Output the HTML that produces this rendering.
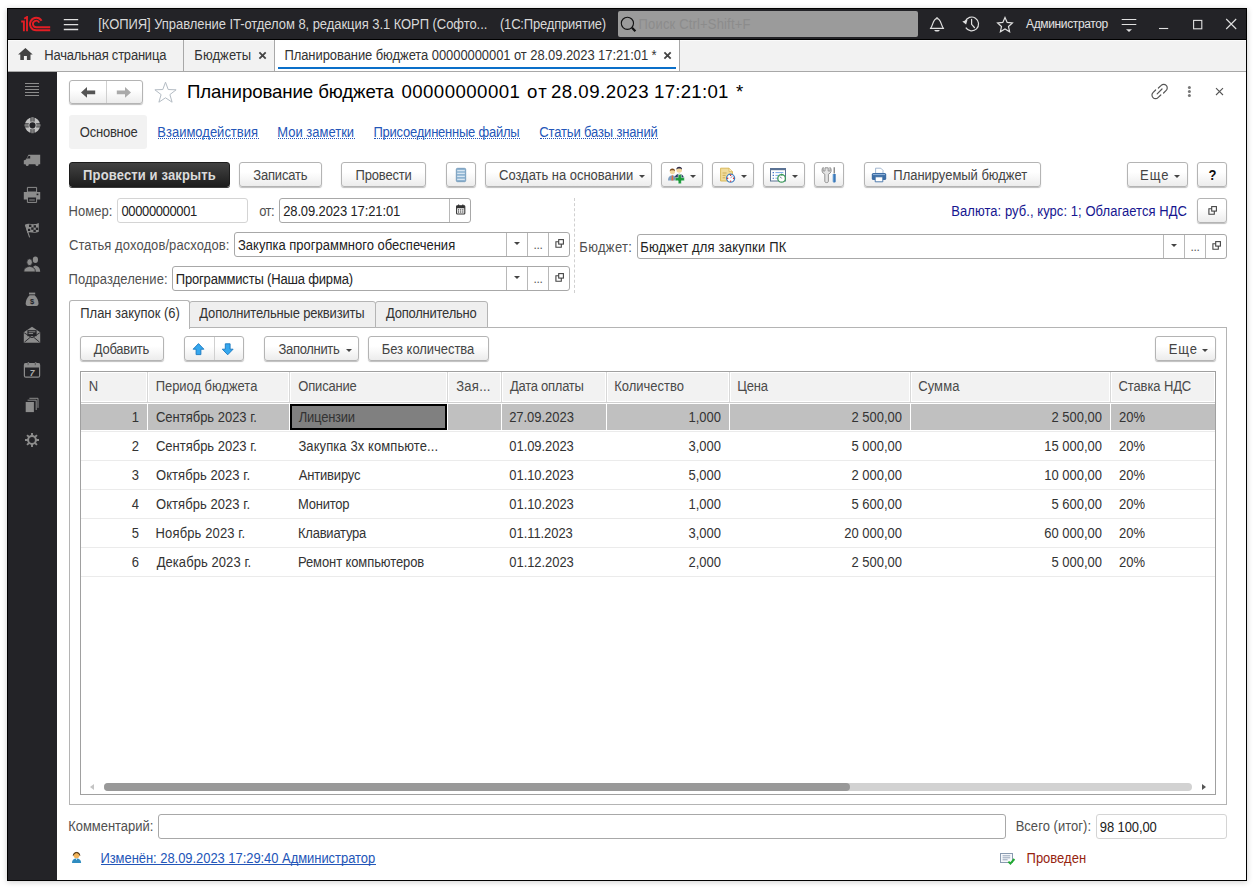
<!DOCTYPE html>
<html lang="ru">
<head>
<meta charset="utf-8">
<title>Планирование бюджета</title>
<style>
*{box-sizing:border-box;margin:0;padding:0}
html,body{width:1254px;height:888px;overflow:hidden;background:#fff}
body{font-family:"Liberation Sans",Arial,sans-serif;font-size:13px;color:#333;position:relative}
.abs{position:absolute}
#shadow{position:absolute;left:7px;top:8px;width:1240px;height:873px;box-shadow:0 1px 6px 0 rgba(0,0,0,.2)}
#win{position:absolute;left:7px;top:8px;width:1240px;height:873px;border:1px solid #000;background:#fff;overflow:hidden}
/* coordinates inside #win are page coords via wrapper offset */
#pg{position:absolute;left:-8px;top:-9px;width:1254px;height:888px}
#titlebar{left:8px;top:9px;width:1238px;height:31px;background:#232327;border-bottom:1px solid #000}
#tabbar{left:8px;top:40px;width:1238px;height:32px;background:#f2f2f2;border-bottom:1px solid #a8a8a8;border-top:1px solid #fafafa}
#side{left:8px;top:72px;width:49px;height:808px;background:#232327}
.t{position:absolute;white-space:nowrap;line-height:16px;height:16px}
.tt{color:#d8d8d8;font-size:13px}
.btn{position:absolute;height:25px;border:1px solid #b4b4b4;border-radius:3px;background:linear-gradient(#fff 0%,#fff 40%,#ececec 100%);box-shadow:0 1px 1px rgba(0,0,0,.26);text-align:center;line-height:25px;white-space:nowrap;color:#444;font-size:13px}
.btn.dark{background:linear-gradient(#424242,#1e1e1e);border-color:#1c1c1c;color:#dadada;font-weight:bold;box-shadow:0 1px 0 #3a3a3a}
.inp{position:absolute;height:25px;border:1px solid #a8a8a8;border-radius:3px;background:#fff;line-height:25px;padding-left:4px;white-space:nowrap;overflow:hidden;color:#222;font-size:13px}
.inp.lt{border-color:#d4d4d4}
.lbl{position:absolute;white-space:nowrap;line-height:16px;color:#505050;font-size:13px}
.lnk{position:absolute;white-space:nowrap;line-height:16px;color:#2456b8;font-size:13px;border-bottom:1px dotted #2456b8;height:14px}
.caret{display:inline-block;width:0;height:0;border-left:3px solid transparent;border-right:3px solid transparent;border-top:4px solid #444;vertical-align:middle;margin-left:5px;position:relative;top:-1px}
.sub{position:absolute;top:0;width:21px;height:23px;border-left:1px solid #b8b8b8;text-align:center;color:#555;line-height:25px;font-size:12px;letter-spacing:-0.3px}
.r{position:absolute;left:81px;width:1134px;height:28px}
.c{position:absolute;top:0;height:28px;line-height:30px;font-size:13px;color:#333;white-space:nowrap;overflow:hidden}
.c1{left:0;width:66px;text-align:right;padding-right:8px}
.c2{left:67px;width:141px;padding-left:8px}
.c3{left:209px;width:157px;padding-left:8px}
.c5{left:422px;width:104px;padding-left:7px}
.c6{left:527px;width:122px;text-align:right;padding-right:9px}
.c7{left:650px;width:179px;text-align:right;padding-right:8px}
.c8{left:830px;width:199px;text-align:right;padding-right:8px}
.c9{left:1030px;width:104px;padding-left:8px}
.car{position:absolute;width:0;height:0;border-left:3.5px solid transparent;border-right:3.5px solid transparent;border-top:3.5px solid #444}
.sub i{position:absolute;left:7px;top:9px;width:0;height:0;border-left:3px solid transparent;border-right:3px solid transparent;border-top:3.500px solid #444}
.sub svg{position:absolute;left:5px;top:5px}
i{font-style:normal}
.x{display:inline-block;position:relative;line-height:normal;transform:scaleY(1.075);transform-origin:0 80%}
.x.n{transform:none}
</style>
</head>
<body>
<div id="shadow"></div>
<div id="win"><div id="pg">

<!-- TITLE BAR -->
<div class="abs" id="titlebar"></div>
<div class="t tt" style="left:98px;top:16.7px"><span class="x" style="letter-spacing:-0.056px;left:0.23px;">[КОПИЯ] Управление IT-отделом 8, редакция 3.1 КОРП (Софто...</span></div>
<div class="t tt" style="left:500px;top:16.7px"><span class="x" style="letter-spacing:-0.186px;left:-0.05px;">(1С:Предприятие)</span></div>
<div class="abs" style="left:618px;top:11px;width:300px;height:26px;background:#9b9b9b;border-radius:2px"></div>
<div class="t" style="left:639px;top:16.7px;color:#8c8c8c;font-size:13px"><span class="x" style="letter-spacing:0.166px;left:-0.44px;">Поиск Ctrl+Shift+F</span></div>
<div class="t" style="left:1026px;top:16px;color:#e4e4e4;font-size:12px"><span class="x n" style="letter-spacing:-0.357px;">Администратор</span></div>

<!-- TAB BAR -->
<div class="abs" id="tabbar"></div>
<div class="abs" style="left:275px;top:40px;width:404px;height:31px;background:#fff"></div>
<div class="abs" style="left:183px;top:40px;width:1px;height:31px;background:#a8a8a8"></div>
<div class="abs" style="left:274px;top:40px;width:1px;height:31px;background:#a8a8a8"></div>
<div class="abs" style="left:679px;top:40px;width:1px;height:31px;background:#a8a8a8"></div>
<div class="abs" style="left:278px;top:67px;width:398px;height:2px;background:#0a6fc9"></div>
<div class="t" style="left:44px;top:48px;color:#333"><span class="x" style="letter-spacing:-0.217px;left:0.27px;">Начальная страница</span></div>
<div class="t" style="left:194px;top:48px;color:#333"><span class="x" style="letter-spacing:0.085px;left:0.27px;">Бюджеты</span></div>
<div class="t" style="left:285px;top:48px;color:#333"><span class="x" style="letter-spacing:-0.078px;left:-0.57px;">Планирование бюджета 00000000001 от 28.09.2023 17:21:01 *</span></div>


<!-- title icons -->
<svg class="abs" style="left:20px;top:16px" width="32" height="16" viewBox="20 16 32 16">
<g fill="none" stroke="#e31e24" stroke-width="1.9">
<path d="M21.2 21.5 L23.9 21.5 L23.9 31.2"/>
<path d="M24.2 18.8 L27 17 L27 31.2"/>
<path d="M41.6 20.8 A6.25 6.25 0 1 0 36.2 30.3 L50.2 30.3"/>
<path d="M39.2 22.6 A3.3 3.3 0 1 0 36.2 27.3 L50.2 27.3"/>
</g></svg>
<svg class="abs" style="left:63px;top:18px" width="16" height="14" viewBox="0 0 16 14"><g stroke="#e0e0e0" stroke-width="1.3"><path d="M0.8 1.7H15.2M0.8 6.6H15.2M0.8 11.5H15.2"/></g></svg>
<svg class="abs" style="left:619px;top:14px" width="20" height="20" viewBox="619 14 20 20"><circle cx="627.4" cy="23.3" r="6.1" fill="none" stroke="#111" stroke-width="1.1"/><path d="M632 27.8L635.4 31.2" stroke="#111" stroke-width="2.2"/></svg>
<svg class="abs" style="left:928px;top:15px" width="18" height="18" viewBox="928 15 18 18"><g fill="none" stroke="#e0e0e0" stroke-width="1.2" stroke-linejoin="round"><path d="M930.4 28.4 C933.2 26 932.6 18.6 937 18.6 C941.4 18.6 940.8 26 943.6 28.4 Z"/><path d="M937 17v1.6"/></g><path d="M934 30h6l-1.6 1.6h-2.8z" fill="#e0e0e0"/></svg>
<svg class="abs" style="left:960px;top:14px" width="22" height="20" viewBox="960 14 22 20"><g fill="none" stroke="#e0e0e0" stroke-width="1.2"><path d="M965.2 21.5 A6.9 6.9 0 1 1 965.8 27.6"/><path d="M971.6 19.3v5l2.8 3.2" stroke-linecap="round"/></g><path d="M962.3 21.4l5.2-1.6-1.4 4.6z" fill="#e0e0e0"/></svg>
<svg class="abs" style="left:996px;top:15px" width="18" height="18" viewBox="996 15 18 18"><path d="M1005 17.4l2.2 5 5.2 .5-3.9 3.6 1.1 5.2-4.6-2.7-4.6 2.7 1.1-5.2-3.9-3.6 5.2-.5z" fill="none" stroke="#e0e0e0" stroke-width="1.2" stroke-linejoin="miter"/></svg>
<svg class="abs" style="left:1120px;top:17px" width="18" height="16" viewBox="1120 17 18 16"><path d="M1121.7 19.5h14.6M1121.7 24.5h14.6" stroke="#e0e0e0" stroke-width="1.2"/><path d="M1126 29.2h6l-3 2.9z" fill="#e0e0e0"/></svg>
<svg class="abs" style="left:1157px;top:17px" width="84" height="16" viewBox="1157 17 84 16"><g fill="none" stroke="#e0e0e0" stroke-width="1.1"><path d="M1159 28.5h9.2"/><rect x="1193.6" y="20.4" width="8.2" height="8.4"/><path d="M1226.2 19l10 10M1236.2 19l-10 10"/></g></svg>
<svg class="abs" style="left:17px;top:47px" width="16" height="14" viewBox="17 47 16 14"><path d="M25.4 47.9l7.3 6.6h-2.2v5.4h-3.6v-3.8h-3v3.8h-3.6v-5.4h-2.2z" fill="#444"/></svg>
<svg class="abs" style="left:258px;top:51px" width="9" height="9" viewBox="0 0 9 9"><path d="M1.400 1.400l6.300 6.300M7.700 1.400l-6.300 6.300" stroke="#444" stroke-width="1.800"/></svg>
<svg class="abs" style="left:663px;top:51px" width="9" height="9" viewBox="0 0 9 9"><path d="M1.400 1.400l6.300 6.300M7.700 1.400l-6.300 6.300" stroke="#444" stroke-width="1.800"/></svg>

<!-- SIDEBAR -->
<div class="abs" id="side"></div>


<!-- side icons -->
<svg class="abs" style="left:24px;top:82px" width="16" height="15" viewBox="24 82 16 15"><path d="M25 83.5h14M25 86.5h14M25 89.5h14M25 92.5h14M25 95.5h14" stroke="#8c8c8c" stroke-width="1"/></svg>
<svg class="abs" style="left:23px;top:116px" width="19" height="19" viewBox="23 116 19 19"><circle cx="32.5" cy="125.3" r="5.400" fill="none" stroke="#c0c0c0" stroke-width="4.600"/><g stroke="#7c7c7c" stroke-width="2.800"><path d="M32.500 117.400v4M32.500 129.200v4M24.600 125.300h4M36.400 125.300h4"/></g><g stroke="#232327" stroke-width="0.700"><path d="M30.800 117.400v4.200M34.200 117.400v4.200M30.800 129v4.200M34.200 129v4.200M24.600 123.600h4.200M24.600 127h4.200M36.200 123.600h4.200M36.200 127h4.200"/></g></svg>
<svg class="abs" style="left:23px;top:153px" width="18" height="14" viewBox="23 153 18 14"><path d="M28.5 154.8h11.7v9.4h-16.4v-3.6l2.2-1.2z" fill="#8c8c8c"/><path d="M28.6 156l-1.8 2.6h3.4v-2.6z" fill="#232327"/><circle cx="27.2" cy="164.6" r="1.5" fill="#8c8c8c"/><circle cx="37" cy="164.6" r="1.5" fill="#8c8c8c"/></svg>
<svg class="abs" style="left:23px;top:186px" width="18" height="18" viewBox="23 186 18 18"><path d="M23.8 192h16.4v7.6h-16.4z" fill="#8c8c8c"/><path d="M27.4 187.4h9.2v4.6h-9.2zM27.4 197h9.2v5.4h-9.2z" fill="#232327" stroke="#8c8c8c" stroke-width="1"/><path d="M29.2 200h5.6" stroke="#8c8c8c" stroke-width="1"/><rect x="36.6" y="193.6" width="1.8" height="1.6" fill="#232327"/></svg>
<svg class="abs" style="left:24px;top:221px" width="17" height="18" viewBox="24 221 17 18"><path d="M25.2 224.6c4-2.4 7.6 1.2 13.6-1.6v8.8c-5.6 2.6-8.6-0.8-11.4 1.2z" fill="#8c8c8c"/><path d="M25.4 224.8l4.2 12.6" stroke="#8c8c8c" stroke-width="1.1"/><g fill="#232327"><rect x="29" y="224.6" width="2.4" height="2.4"/><rect x="33.6" y="225.2" width="2.4" height="2.4"/><rect x="31.2" y="227.4" width="2.4" height="2.4"/><rect x="35.8" y="227.6" width="2.4" height="2.4"/><rect x="28" y="228.8" width="2.2" height="2.2"/><rect x="33.4" y="229.8" width="2.4" height="2.2"/></g></svg>
<svg class="abs" style="left:23px;top:255px" width="18" height="18" viewBox="23 255 18 18"><g fill="#8c8c8c"><ellipse cx="35.4" cy="259.8" rx="2.6" ry="3.2"/><path d="M31.6 271.7c0-4.2 1.6-5.4 3.8-6.2 2.2.8 4.8 1.6 4.8 6.2z"/></g><g fill="#8c8c8c" stroke="#232327" stroke-width="0.8"><ellipse cx="29.6" cy="262.2" rx="2.8" ry="3.4"/><path d="M23.8 271.9c0-3.8 2-4.800 5.800-5.600 3.800.8 5.800 1.800 5.800 5.600z"/></g></svg>
<svg class="abs" style="left:25px;top:291px" width="15" height="16" viewBox="25 291 15 16"><path d="M29 292.6h6.200v1.800h-6.200z" fill="#8c8c8c"/><path d="M29.600 295.200h5c2.400 2.400 3.900 5 3.900 8.200 0 1.600-.8 2.500-2 2.500h-8.800c-1.200 0-2-.9-2-2.500 0-3.200 1.500-5.800 3.900-8.200z" fill="#8c8c8c"/><text x="32.1" y="304" font-size="7.5" font-weight="bold" text-anchor="middle" fill="#232327" font-family="Liberation Sans,sans-serif">$</text></svg>
<svg class="abs" style="left:23px;top:325px" width="18" height="19" viewBox="23 325 18 19"><path d="M23.800 332.200l8.200-5.500 8.200 5.500v10.600h-16.400z" fill="#8c8c8c"/><path d="M24.400 342.200l6.400-5.400M39.600 342.200l-6.400-5.400M24.200 332.800l7.800 5 7.800-5" stroke="#232327" stroke-width="0.9" fill="none"/><rect x="27.400" y="330.200" width="9.200" height="6" fill="#232327"/><path d="M28.600 331.800h6.800M28.600 333.600h4.500" stroke="#8c8c8c" stroke-width="1"/></svg>
<svg class="abs" style="left:23px;top:361px" width="18" height="18" viewBox="23 361 18 18"><rect x="24.400" y="363.600" width="15.200" height="13.600" rx="1.500" fill="none" stroke="#8c8c8c" stroke-width="1.200"/><path d="M24.400 363.600h15.200v4h-15.200z" fill="#8c8c8c"/><path d="M28.400 362v3.400M35.600 362v3.400" stroke="#8c8c8c" stroke-width="1.400"/><path d="M28.100 362.200v3M35.300 362.200v3" stroke="#232327" stroke-width="0.500"/><text x="32" y="376" font-size="8.500" font-weight="bold" font-style="italic" text-anchor="middle" fill="#b0b0b0" font-family="Liberation Sans,sans-serif">7</text></svg>
<svg class="abs" style="left:25px;top:397px" width="15" height="16" viewBox="25 397 15 16"><path d="M29.400 398.300h8.600v9.600M27.600 400.200h8.600v9.800" fill="none" stroke="#8c8c8c" stroke-width="1"/><rect x="25.700" y="402" width="8.200" height="10.100" fill="#8c8c8c"/></svg>
<svg class="abs" style="left:24px;top:432px" width="16" height="16" viewBox="24 432 16 16"><circle cx="32" cy="440" r="3.900" fill="none" stroke="#8c8c8c" stroke-width="2"/><g stroke="#8c8c8c" stroke-width="1.900"><path d="M32 433v3M32 444v3M25 440h3M36 440h3M27.050 435.050l2.100 2.100M34.850 442.850l2.100 2.100M27.050 444.950l2.100-2.100M34.850 437.150l2.100-2.100"/></g></svg>

<!-- HEADER -->
<div class="btn" style="left:69px;top:80px;width:74px;height:24px"></div>
<div class="abs" style="left:106px;top:81px;width:1px;height:22px;background:#d0d0d0"></div>
<div class="t" style="left:187px;top:80px;font-size:18.67px;line-height:24px;height:24px;color:#000"><i><span class="x n" style="letter-spacing:-0.096px;left:-0.04px;">Планирование бюджета</span></i> <i><span class="x n" style="letter-spacing:0.435px;left:2.53px;">00000000001</span></i> <i><span class="x n" style="letter-spacing:1.328px;left:3.90px;">от</span></i> <i><span class="x n" style="letter-spacing:0.498px;left:1.56px;">28.09.2023</span></i> <i><span class="x n" style="letter-spacing:0.256px;left:1.14px;">17:21:01</span></i> <i><span class="x n" style="left:3.13px;">*</span></i></div>

<div class="abs" style="left:69px;top:115px;width:78px;height:34px;background:#f2f2f2;border-radius:3px"></div>
<div class="t" style="left:80px;top:125px;color:#333"><span class="x" style="letter-spacing:-0.231px;left:-0.23px;">Основное</span></div>
<div class="lnk" style="left:158px;top:125px"><span class="x" style="letter-spacing:-0.002px;left:-0.70px;">Взаимодействия</span></div>
<div class="lnk" style="left:278px;top:125px"><span class="x" style="letter-spacing:-0.011px;left:-0.72px;">Мои заметки</span></div>
<div class="lnk" style="left:374px;top:125px"><span class="x" style="letter-spacing:-0.228px;left:-0.54px;">Присоединенные файлы</span></div>
<div class="lnk" style="left:540px;top:125px"><span class="x" style="letter-spacing:-0.146px;left:-0.71px;">Статьи базы знаний</span></div>


<!-- header icons -->
<svg class="abs" style="left:80px;top:86px" width="52" height="13" viewBox="80 86 52 13"><path d="M81 92.400l6-5.400v3.600h8.200v3.600h-8.200v3.600z" fill="#555"/><path d="M131 92.400l-6-5.400v3.600h-8.200v3.600h8.200v3.600z" fill="#aaa"/></svg>
<svg class="abs" style="left:153px;top:80px" width="26" height="25" viewBox="153 80 26 25"><path d="M165.500 82.200l2.700 7.300 7.900.3-6.200 4.800 2.200 7.600-6.600-4.400-6.600 4.400 2.200-7.600-6.200-4.800 7.900-.3z" fill="#fff" stroke="#b4bcc4" stroke-width="1"/></svg>
<svg class="abs" style="left:1150px;top:82px" width="20" height="19" viewBox="1150 82 20 19"><g fill="none" stroke="#555" stroke-width="1.200" stroke-linecap="round"><path d="M1158.400 88l2.800-2.600a3.500 3.500 0 0 1 5 5l-2.600 2.600"/><path d="M1160.800 95l-2.800 2.600a3.500 3.500 0 0 1-5-5l2.600-2.600"/><path d="M1157.200 93.800l4.800-4.800"/></g></svg>
<svg class="abs" style="left:1187px;top:85px" width="5" height="13" viewBox="0 0 5 13"><g fill="#777"><circle cx="2.400" cy="2.400" r="1.500"/><circle cx="2.400" cy="6.400" r="1.500"/><circle cx="2.400" cy="10.400" r="1.500"/></g></svg>
<svg class="abs" style="left:1215px;top:87px" width="9" height="9" viewBox="0 0 9 9"><path d="M1 1.200l7 6.800M8 1.200l-7 6.800" stroke="#555" stroke-width="1.100"/></svg>

<!-- COMMAND BAR -->
<div class="btn dark" style="left:69px;top:162px;width:161px"><span class="x" style="letter-spacing:0.136px;">Провести и закрыть</span></div>
<div class="btn" style="left:239px;top:162px;width:83px"><span class="x" style="letter-spacing:-0.174px;left:-0.19px;">Записать</span></div>
<div class="btn" style="left:341px;top:162px;width:85px"><span class="x" style="letter-spacing:-0.199px;left:0.08px;">Провести</span></div>
<div class="btn" style="left:446px;top:162px;width:30px"></div>
<div class="btn" style="left:485px;top:162px;width:167px;text-align:left;padding-left:13px"><span class="x" style="letter-spacing:-0.032px;left:0.05px;">Создать на основании</span><i class="car" style="left:153px;top:12px"></i></div>
<div class="btn" style="left:661px;top:162px;width:42px"></div>
<div class="btn" style="left:712px;top:162px;width:42px"></div>
<div class="btn" style="left:763px;top:162px;width:42px"></div>
<div class="btn" style="left:814px;top:162px;width:30px"></div>
<div class="btn" style="left:864px;top:162px;width:177px;text-align:left;padding-left:30px"><span class="x" style="letter-spacing:-0.030px;left:-1.65px;">Планируемый бюджет</span></div>
<div class="btn" style="left:1127px;top:162px;width:61px;text-align:left;padding-left:13px"><span class="x" style="letter-spacing:1.092px;left:-1.06px;">Еще</span><i class="car" style="left:46px;top:12px"></i></div>
<div class="btn" style="left:1197px;top:162px;width:30px;font-weight:bold;color:#111"><span class="x" style="left:0.37px;">?</span></div>


<!-- command icons -->
<svg class="abs" style="left:455px;top:167px" width="12" height="16" viewBox="455 167 12 16"><rect x="456.300" y="168.300" width="9.400" height="13.400" rx="1.200" fill="#8fb4d2" stroke="#6c93b4" stroke-width="0.800"/><path d="M457.200 170.600h7.600M457.200 173.400h7.600M457.200 176.400h7.600M457.200 179.400h7.600" stroke="#d8e6f2" stroke-width="1.300"/></svg>
<svg class="abs" style="left:667px;top:166px" width="19" height="18" viewBox="667 166 19 18">
<circle cx="672.400" cy="171.600" r="2.600" fill="#f3d9a0"/><path d="M669.800 171.200a2.600 2.600 0 0 1 5.200 0c-1-1.400-4.200-1.400-5.200 0z" fill="#7a4a1e"/>
<path d="M668 180.600c0-3.600 1.600-5 4.400-5.400 2.800.4 4.400 1.800 4.400 5.400z" fill="#7f9fc0"/><path d="M671.800 175.600h1.200l.4 4.800h-2z" fill="#e0703a"/>
<circle cx="679.200" cy="170" r="2.800" fill="#f3d9a0"/><path d="M676.400 169.600a2.800 2.800 0 0 1 5.600 0c-1-1.600-4.600-1.600-5.600 0z" fill="#2e2a4a"/>
<path d="M674.600 179.400c0-3.800 1.800-5.200 4.600-5.600 2.800.4 4.800 1.800 4.800 5.600z" fill="#2a3a6a"/><path d="M678.400 174h1.600l-.8 3z" fill="#fff"/>
<path d="M678.200 174.600h3.200v3h3v3.200h-3v3h-3.200v-3h-3v-3.200h3z" fill="#1a9a3a" stroke="#fff" stroke-width="0.500"/>
</svg>
<svg class="abs" style="left:719px;top:167px" width="18" height="17" viewBox="719 167 18 17">
<path d="M720.600 168.200h8.400l3.400 3.400v9.400h-11.800z" fill="#f0dc9c" stroke="#d9b95a" stroke-width="1"/><path d="M729 168.200v3.400h3.400" fill="#f8ecc4" stroke="#d9b95a" stroke-width="0.800"/>
<path d="M722.600 173h4M722.600 175.400h3M722.600 177.800h2.600" stroke="#c9a850" stroke-width="0.900"/>
<circle cx="730.600" cy="178.200" r="4" fill="#fff" stroke="#3f7fc0" stroke-width="1.300"/>
<g fill="#e01818"><circle cx="730.600" cy="175.300" r="0.700"/><circle cx="730.600" cy="181.100" r="0.700"/><circle cx="727.700" cy="178.200" r="0.700"/><circle cx="733.500" cy="178.200" r="0.700"/></g><path d="M730.600 178.200l1.800-2.200" stroke="#88a" stroke-width="0.800"/>
</svg>
<svg class="abs" style="left:769px;top:167px" width="18" height="17" viewBox="769 167 18 17">
<rect x="770.500" y="168.500" width="15" height="12.500" fill="#fff" stroke="#5a7294" stroke-width="1"/><path d="M770 168h16v2.200h-16z" fill="#5a7294"/>
<path d="M775.400 172.600h8M775.400 175.400h6M775.400 178.200h3" stroke="#7aa8ea" stroke-width="1"/><path d="M772.600 172.600h1.400M772.600 175.400h1.400M772.600 178.200h1.400" stroke="#4a78c8" stroke-width="1.100"/>
<circle cx="781.600" cy="178.400" r="3.800" fill="#fff" stroke="#3a9a58" stroke-width="1.300"/><path d="M781.600 178.400l-1.600-1.800" stroke="#557" stroke-width="0.900"/><path d="M781 173.400l2.400 1-2 1.600z" fill="#3a9a58"/>
</svg>
<svg class="abs" style="left:821px;top:166px" width="17" height="18" viewBox="821 166 17 18">
<path d="M823.200 167.400c-1.600 1.200-1.600 4.600 0 5.800l1.600 1v7.200c0 1.600 3.600 1.600 3.600 0v-7.200l1.600-1c1.600-1.200 1.600-4.600 0-5.800v3.600h-1.800v-3.200h-3.200v3.200h-1.800z" fill="#e4e4e4" stroke="#8a8a8a" stroke-width="0.900" stroke-linejoin="round"/>
<path d="M834.200 167.200v6.400" stroke="#666" stroke-width="1.100"/><path d="M832.800 174h2.900v7.600c0 1.300-2.900 1.300-2.900 0z" fill="#3a78b8"/><path d="M833.400 174v8" stroke="#7ab0e0" stroke-width="0.600"/>
</svg>
<svg class="abs" style="left:871px;top:167px" width="16" height="16" viewBox="871 167 16 16">
<path d="M875.600 168.200h5.200l2.200 2.200v3h-7.400z" fill="#fff" stroke="#8aa4c4" stroke-width="0.800"/>
<rect x="871.800" y="173" width="14.400" height="7" rx="1.600" fill="#3d6ea6"/><path d="M873 174.600h12" stroke="#9fc0e4" stroke-width="0.900"/>
<path d="M875.200 176.800h7.600v5h-7.600z" fill="#fff" stroke="#3d6ea6" stroke-width="0.900"/>
</svg>
<div class="car" style="left:690px;top:175px"></div>
<div class="car" style="left:741px;top:175px"></div>
<div class="car" style="left:792px;top:175px"></div>

<!-- FIELDS -->
<div class="lbl" style="left:69px;top:204px"><span class="x" style="letter-spacing:0.033px;left:-0.47px;">Номер:</span></div>
<div class="inp lt" style="left:117px;top:198px;width:131px"><span class="x" style="letter-spacing:-0.379px;left:-0.50px;">00000000001</span></div>
<div class="lbl" style="left:258px;top:204px"><span class="x" style="letter-spacing:-0.528px;left:1.19px;">от:</span></div>
<div class="inp" style="left:279px;top:198px;width:192px"><span class="x" style="letter-spacing:-0.123px;left:-0.83px;">28.09.2023 17:21:01</span><div class="sub" style="right:0"><svg width="10" height="11" viewBox="0 0 10 11" style="top:5px;left:6px"><rect x="0.600" y="1.800" width="8.200" height="8.200" rx="0.800" fill="#fff" stroke="#333" stroke-width="1.100"/><path d="M0.600 1.800h8.200v2.400h-8.200z" fill="#333"/><path d="M2.600 0.400v2M6.800 0.400v2" stroke="#333" stroke-width="1.200"/><g fill="#333"><rect x="2" y="5.300" width="1.200" height="1.200"/><rect x="4.100" y="5.300" width="1.200" height="1.200"/><rect x="6.200" y="5.300" width="1.200" height="1.200"/><rect x="2" y="7.400" width="1.200" height="1.200"/><rect x="4.100" y="7.400" width="1.200" height="1.200"/><rect x="6.200" y="7.400" width="1.200" height="1.200"/></g></svg></div></div>
<div class="t" style="left:952px;top:204px;color:#161690;font-size:13px"><span class="x" style="letter-spacing:0.059px;left:-0.79px;">Валюта: руб., курс: 1; Облагается НДС</span></div>
<div class="btn" style="left:1197px;top:198px;width:30px"><svg class="abs" style="left:9px;top:6px" width="11" height="11" viewBox="0 0 11 11"><g fill="none" stroke="#444" stroke-width="1.100"><rect x="4.700" y="1.600" width="4.700" height="4.500"/><path d="M4.700 3.800h-2.800v5.400h5.400v-3.100"/></g></svg></div>
<div class="abs" style="left:574px;top:198px;width:0;height:95px;border-left:1px dashed #d0d0d0"></div>

<div class="lbl" style="left:69px;top:238px"><span class="x" style="letter-spacing:0.086px;left:-0.02px;">Статья доходов/расходов:</span></div>
<div class="inp" style="left:234px;top:232px;width:336px"><span class="x" style="letter-spacing:0.001px;left:-1.01px;">Закупка программного обеспечения</span><div class="sub" style="right:42px"><i></i></div><div class="sub" style="right:21px"><span class="x n">...</span></div><div class="sub" style="right:0"><svg width="11" height="11" viewBox="0 0 11 11"><g fill="none" stroke="#444" stroke-width="1.100"><rect x="4.700" y="1.600" width="4.700" height="4.500"/><path d="M4.700 3.800h-2.800v5.400h5.400v-3.100"/></g></svg></div></div>
<div class="lbl" style="left:580px;top:240px"><span class="x" style="letter-spacing:0.341px;left:-0.74px;">Бюджет:</span></div>
<div class="inp" style="left:637px;top:234px;width:590px"><span class="x" style="letter-spacing:0.179px;left:-1.82px;">Бюджет для закупки ПК</span><div class="sub" style="right:42px"><i></i></div><div class="sub" style="right:21px"><span class="x n">...</span></div><div class="sub" style="right:0"><svg width="11" height="11" viewBox="0 0 11 11"><g fill="none" stroke="#444" stroke-width="1.100"><rect x="4.700" y="1.600" width="4.700" height="4.500"/><path d="M4.700 3.800h-2.800v5.400h5.400v-3.100"/></g></svg></div></div>
<div class="lbl" style="left:69px;top:272px"><span class="x" style="letter-spacing:0.046px;left:-0.43px;">Подразделение:</span></div>
<div class="inp" style="left:172px;top:266px;width:398px"><span class="x" style="letter-spacing:-0.170px;left:-1.30px;">Программисты (Наша фирма)</span><div class="sub" style="right:42px"><i></i></div><div class="sub" style="right:21px"><span class="x n">...</span></div><div class="sub" style="right:0"><svg width="11" height="11" viewBox="0 0 11 11"><g fill="none" stroke="#444" stroke-width="1.100"><rect x="4.700" y="1.600" width="4.700" height="4.500"/><path d="M4.700 3.800h-2.800v5.400h5.400v-3.100"/></g></svg></div></div>

<!-- PAGES -->
<div class="abs" style="left:69px;top:327px;width:1158px;height:478px;border:1px solid #b4b4b4"></div>
<div class="abs" style="left:189px;top:301px;width:187px;height:27px;background:#efefef;border:1px solid #b4b4b4;border-radius:3px 3px 0 0"></div>
<div class="abs" style="left:375px;top:301px;width:113px;height:27px;background:#efefef;border:1px solid #b4b4b4;border-radius:3px 3px 0 0"></div>
<div class="abs" style="left:69px;top:300px;width:121px;height:29px;background:#fff;border:1px solid #b4b4b4;border-bottom:none;border-radius:3px 3px 0 0"></div>
<div class="t" style="left:80px;top:306px;color:#333"><span class="x" style="letter-spacing:-0.022px;left:0.29px;">План закупок (6)</span></div>
<div class="t" style="left:200px;top:306px;color:#333"><span class="x" style="letter-spacing:-0.172px;left:-0.71px;">Дополнительные реквизиты</span></div>
<div class="t" style="left:386px;top:306px;color:#333"><span class="x" style="letter-spacing:-0.229px;left:-0.08px;">Дополнительно</span></div>

<div class="btn" style="left:80px;top:336px;width:84px"><span class="x" style="letter-spacing:-0.288px;left:-0.57px;">Добавить</span></div>
<div class="btn" style="left:184px;top:336px;width:60px"></div>
<div class="abs" style="left:214px;top:337px;width:1px;height:23px;background:#d0d0d0"></div>
<div class="btn" style="left:264px;top:336px;width:95px;text-align:left;padding-left:14px"><span class="x" style="letter-spacing:-0.311px;left:-0.57px;">Заполнить</span><i class="car" style="left:81px;top:12px"></i></div>
<div class="btn" style="left:368px;top:336px;width:121px"><span class="x" style="letter-spacing:-0.044px;left:-0.50px;">Без количества</span></div>
<div class="btn" style="left:1155px;top:336px;width:61px;text-align:left;padding-left:13px"><span class="x" style="letter-spacing:0.787px;left:-0.17px;">Еще</span><i class="car" style="left:46px;top:12px"></i></div>

<svg class="abs" style="left:191px;top:342px" width="44" height="14" viewBox="191 342 44 14"><path d="M198.500 343.600l5.400 5.600h-3v5.400h-4.800v-5.400h-3z" fill="#35a7ee" stroke="#1a78c0" stroke-width="0.900" stroke-linejoin="round"/><path d="M227.700 354.800l5.400-5.600h-3v-5.400h-4.800v5.400h-3z" fill="#35a7ee" stroke="#1a78c0" stroke-width="0.900" stroke-linejoin="round"/></svg>
<!-- TABLE -->
<div class="abs" id="tbl" style="left:80px;top:371px;width:1136px;height:424px;border:1px solid #a0a0a0;background:#fff"></div>
<div class="abs" style="left:82px;top:373px;width:64px;height:28px;background:#f2f2f2"></div>
<div class="abs" style="left:149px;top:373px;width:139px;height:28px;background:#f2f2f2"></div>
<div class="abs" style="left:291px;top:373px;width:155px;height:28px;background:#f2f2f2"></div>
<div class="abs" style="left:449px;top:373px;width:51px;height:28px;background:#f2f2f2"></div>
<div class="abs" style="left:503px;top:373px;width:102px;height:28px;background:#f2f2f2"></div>
<div class="abs" style="left:608px;top:373px;width:120px;height:28px;background:#f2f2f2"></div>
<div class="abs" style="left:731px;top:373px;width:178px;height:28px;background:#f2f2f2"></div>
<div class="abs" style="left:912px;top:373px;width:197px;height:28px;background:#f2f2f2"></div>
<div class="abs" style="left:1112px;top:373px;width:102px;height:28px;background:#f2f2f2"></div>
<div class="abs" style="left:147px;top:372px;width:1px;height:30px;background:#d8d8d8"></div>
<div class="abs" style="left:289px;top:372px;width:1px;height:30px;background:#d8d8d8"></div>
<div class="abs" style="left:447px;top:372px;width:1px;height:30px;background:#d8d8d8"></div>
<div class="abs" style="left:501px;top:372px;width:1px;height:30px;background:#d8d8d8"></div>
<div class="abs" style="left:606px;top:372px;width:1px;height:30px;background:#d8d8d8"></div>
<div class="abs" style="left:729px;top:372px;width:1px;height:30px;background:#d8d8d8"></div>
<div class="abs" style="left:910px;top:372px;width:1px;height:30px;background:#d8d8d8"></div>
<div class="abs" style="left:1110px;top:372px;width:1px;height:30px;background:#d8d8d8"></div>
<div class="abs" style="left:81px;top:402px;width:1134px;height:1px;background:#d0d0d0"></div>
<div class="t" style="left:89px;top:379px;color:#4a4a4a"><span class="x" style="left:-0.37px;">N</span></div>
<div class="t" style="left:156px;top:379px;color:#4a4a4a"><span class="x" style="letter-spacing:-0.044px;left:-0.30px;">Период бюджета</span></div>
<div class="t" style="left:298px;top:379px;color:#4a4a4a"><span class="x" style="letter-spacing:-0.193px;left:0.34px;">Описание</span></div>
<div class="t" style="left:456px;top:379px;color:#4a4a4a"><span class="x" style="letter-spacing:0.254px;left:0.26px;">Зая...</span></div>
<div class="t" style="left:510px;top:379px;color:#4a4a4a"><span class="x" style="letter-spacing:-0.245px;left:-0.13px;">Дата оплаты</span></div>
<div class="t" style="left:615px;top:379px;color:#4a4a4a"><span class="x" style="letter-spacing:0.001px;left:-0.86px;">Количество</span></div>
<div class="t" style="left:738px;top:379px;color:#4a4a4a"><span class="x" style="letter-spacing:-0.148px;left:-0.74px;">Цена</span></div>
<div class="t" style="left:919px;top:379px;color:#4a4a4a"><span class="x" style="letter-spacing:0.121px;left:-0.86px;">Сумма</span></div>
<div class="t" style="left:1119px;top:379px;color:#4a4a4a"><span class="x" style="letter-spacing:-0.107px;left:-0.53px;">Ставка НДС</span></div>
<div class="abs" style="left:81px;top:404px;width:1134px;height:26px;background:#c0c0c0"></div>
<div class="abs" style="left:147px;top:404px;width:1px;height:26px;background:#fff"></div>
<div class="abs" style="left:289px;top:404px;width:1px;height:26px;background:#fff"></div>
<div class="abs" style="left:447px;top:404px;width:1px;height:26px;background:#fff"></div>
<div class="abs" style="left:501px;top:404px;width:1px;height:26px;background:#fff"></div>
<div class="abs" style="left:606px;top:404px;width:1px;height:26px;background:#fff"></div>
<div class="abs" style="left:729px;top:404px;width:1px;height:26px;background:#fff"></div>
<div class="abs" style="left:910px;top:404px;width:1px;height:26px;background:#fff"></div>
<div class="abs" style="left:1110px;top:404px;width:1px;height:26px;background:#fff"></div>
<div class="abs" style="left:290px;top:404px;width:157px;height:26px;background:#808080;border:2px solid #000"></div>
<div class="abs" style="left:81px;top:431px;width:1134px;height:1px;background:#ebebeb"></div>
<div class="r" style="top:403px"><span class="c c1"><span class="x">1</span></span><span class="c c2"><span class="x" style="letter-spacing:-0.016px;">Сентябрь 2023 г.</span></span><span class="c c3"><span class="x" style="letter-spacing:-0.230px;left:0.74px;">Лицензии</span></span><span class="c c5"><span class="x" style="letter-spacing:-0.036px;left:-0.88px;">27.09.2023</span></span><span class="c c6"><span class="x">1,000</span></span><span class="c c7"><span class="x">2 500,00</span></span><span class="c c8"><span class="x">2 500,00</span></span><span class="c c9"><span class="x">20%</span></span></div>
<div class="abs" style="left:81px;top:460px;width:1134px;height:1px;background:#ebebeb"></div>
<div class="r" style="top:432px"><span class="c c1"><span class="x">2</span></span><span class="c c2"><span class="x" style="letter-spacing:-0.016px;">Сентябрь 2023 г.</span></span><span class="c c3"><span class="x" style="letter-spacing:0.092px;left:0.39px;">Закупка 3х компьюте...</span></span><span class="c c5"><span class="x" style="letter-spacing:-0.063px;left:-0.70px;">01.09.2023</span></span><span class="c c6"><span class="x">3,000</span></span><span class="c c7"><span class="x">5 000,00</span></span><span class="c c8"><span class="x">15 000,00</span></span><span class="c c9"><span class="x">20%</span></span></div>
<div class="abs" style="left:81px;top:489px;width:1134px;height:1px;background:#ebebeb"></div>
<div class="r" style="top:461px"><span class="c c1"><span class="x">3</span></span><span class="c c2"><span class="x" style="letter-spacing:0.053px;left:0.07px;">Октябрь 2023 г.</span></span><span class="c c3"><span class="x" style="letter-spacing:-0.170px;left:0.71px;">Антивирус</span></span><span class="c c5"><span class="x" style="letter-spacing:-0.063px;left:-0.70px;">01.10.2023</span></span><span class="c c6"><span class="x">5,000</span></span><span class="c c7"><span class="x">2 000,00</span></span><span class="c c8"><span class="x">10 000,00</span></span><span class="c c9"><span class="x">20%</span></span></div>
<div class="abs" style="left:81px;top:518px;width:1134px;height:1px;background:#ebebeb"></div>
<div class="r" style="top:490px"><span class="c c1"><span class="x">4</span></span><span class="c c2"><span class="x" style="letter-spacing:0.053px;left:0.07px;">Октябрь 2023 г.</span></span><span class="c c3"><span class="x" style="letter-spacing:-0.240px;left:-0.02px;">Монитор</span></span><span class="c c5"><span class="x" style="letter-spacing:-0.063px;left:-0.70px;">01.10.2023</span></span><span class="c c6"><span class="x">1,000</span></span><span class="c c7"><span class="x">5 600,00</span></span><span class="c c8"><span class="x">5 600,00</span></span><span class="c c9"><span class="x">20%</span></span></div>
<div class="abs" style="left:81px;top:547px;width:1134px;height:1px;background:#ebebeb"></div>
<div class="r" style="top:519px"><span class="c c1"><span class="x">5</span></span><span class="c c2"><span class="x" style="letter-spacing:0.121px;left:-0.40px;">Ноябрь 2023 г.</span></span><span class="c c3"><span class="x" style="letter-spacing:-0.233px;left:-0.02px;">Клавиатура</span></span><span class="c c5"><span class="x" style="letter-spacing:-0.063px;left:-0.70px;">01.11.2023</span></span><span class="c c6"><span class="x">3,000</span></span><span class="c c7"><span class="x">20 000,00</span></span><span class="c c8"><span class="x">60 000,00</span></span><span class="c c9"><span class="x">20%</span></span></div>
<div class="abs" style="left:81px;top:576px;width:1134px;height:1px;background:#ebebeb"></div>
<div class="r" style="top:548px"><span class="c c1"><span class="x">6</span></span><span class="c c2"><span class="x" style="letter-spacing:0.072px;left:0.63px;">Декабрь 2023 г.</span></span><span class="c c3"><span class="x" style="letter-spacing:-0.102px;left:-0.02px;">Ремонт компьютеров</span></span><span class="c c5"><span class="x" style="letter-spacing:-0.063px;left:-0.70px;">01.12.2023</span></span><span class="c c6"><span class="x">2,000</span></span><span class="c c7"><span class="x">2 500,00</span></span><span class="c c8"><span class="x">5 000,00</span></span><span class="c c9"><span class="x">20%</span></span></div>
<div class="abs" style="left:104px;top:783px;width:1088px;height:8px;border-radius:4px;background:#d2d2d2"></div>
<div class="abs" style="left:104px;top:783px;width:746px;height:8px;border-radius:4px;background:#999"></div>
<div class="abs" style="left:90px;top:784px;width:0;height:0;border-top:3px solid transparent;border-bottom:3px solid transparent;border-right:4px solid #c4c4c4"></div>
<div class="abs" style="left:1202px;top:784px;width:0;height:0;border-top:3px solid transparent;border-bottom:3px solid transparent;border-left:4px solid #555"></div>

<!-- BOTTOM -->
<div class="lbl" style="left:69px;top:819px"><span class="x" style="letter-spacing:-0.046px;left:-0.74px;">Комментарий:</span></div>
<div class="inp" style="left:158px;top:814px;width:848px"></div>
<div class="lbl" style="left:1016px;top:819px"><span class="x" style="letter-spacing:0.039px;left:-0.38px;">Всего (итог):</span></div>
<div class="inp lt" style="left:1096px;top:814px;width:131px"><span class="x" style="letter-spacing:-0.102px;left:-1.22px;">98 100,00</span></div>
<div class="t" style="left:101px;top:851px;color:#2456b8;height:14px;border-bottom:1px solid #2456b8"><span class="x" style="letter-spacing:-0.054px;left:-0.59px;">Изменён: 28.09.2023 17:29:40 Администратор</span></div>
<div class="t" style="left:1027px;top:851px;color:#962410"><span class="x" style="letter-spacing:0.003px;left:-0.48px;">Проведен</span></div>

<svg class="abs" style="left:71px;top:850px" width="12" height="14" viewBox="71 850 12 14"><path d="M72 863c0-3 1.400-4.400 4.500-4.800 3.100.4 4.600 1.800 4.600 4.800z" fill="#2f8cc0"/><path d="M75.700 858.400l.8 1.800.8-1.800z" fill="#fff"/><circle cx="76.500" cy="855.200" r="3" fill="#f2b45a"/><path d="M73.300 855.400a3.300 3.300 0 0 1 6.500 0c-.3-2-1.400-3-3.200-3s-3 1-3.300 3z" fill="#4a3010" stroke="#4a3010" stroke-width="0.800"/></svg>
<svg class="abs" style="left:999px;top:852px" width="17" height="14" viewBox="999 852 17 14"><rect x="1000.500" y="853.500" width="12" height="9" fill="#f6f8fb" stroke="#8a9bb0" stroke-width="1"/><path d="M1002.600 855.800h7.600M1002.600 857.800h7.600M1002.600 859.800h5" stroke="#8a9bb0" stroke-width="0.900"/><path d="M1008.400 861.600l2 2 4-4.600" fill="none" stroke="#22aa33" stroke-width="2"/></svg>
</div></div>
</body>
</html>
